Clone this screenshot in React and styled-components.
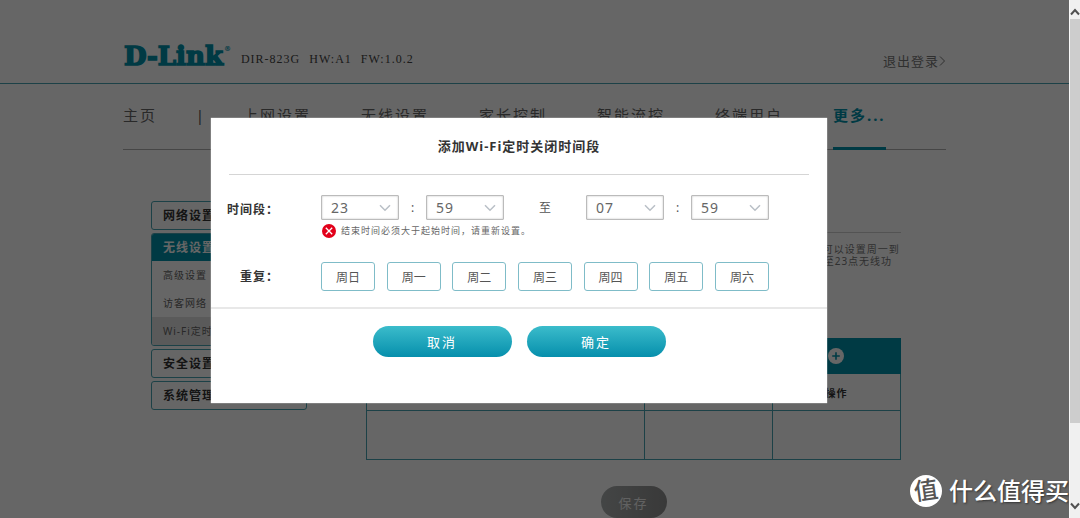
import React, { useState } from "react";
import styled, { createGlobalStyle, css } from "styled-components";

const teal = "#0091aa";
const line = "#48a2b1";

const GlobalStyle = createGlobalStyle`
  * {
    box-sizing: border-box;
  }
  body {
    margin: 0;
    background: #fff;
    color: #555;
    font-family: "Noto Sans", "Noto Sans CJK SC", sans-serif;
    font-size: 12px;
  }
  h2, h3, p, ul {
    margin: 0;
    padding: 0;
    list-style: none;
  }
  button, select {
    font-family: inherit;
    cursor: pointer;
  }
  a {
    color: inherit;
    text-decoration: none;
  }
`;

const Shell = styled.div`
  display: flex;
  height: 100vh;
`;

const Viewport = styled.div`
  position: relative;
  flex: 1;
  overflow: hidden;
`;

const Container = styled.div`
  width: 77%;
  margin: 0 auto;
`;

/* header */

const Header = styled.header`
  height: 84px;
  border-bottom: 1px solid ${line};
`;

const HeaderInner = styled(Container)`
  display: flex;
  align-items: flex-end;
  height: 100%;
  padding-bottom: 12px;
`;

const Logo = styled.svg`
  width: 108px;
  height: 28px;
  margin-right: 10px;
  overflow: visible;
  text {
    fill: ${teal};
    stroke: ${teal};
    font-family: "DejaVu Serif", serif;
    font-weight: bold;
  }
`;

const Version = styled.div`
  display: flex;
  gap: 9px;
  margin-bottom: 4px;
  color: #444;
  font-family: "Liberation Serif", serif;
  line-height: 16px;
  letter-spacing: 1px;
`;

const Logout = styled.a`
  display: flex;
  align-items: center;
  margin-left: auto;
  font-size: 13px;
  line-height: 20px;
  letter-spacing: 1px;
  color: #777;
`;

const NavList = styled.ul`
  display: flex;
  box-shadow: inset 0 -1px #b0b0b0;
`;

const NavItem = styled.li`
  flex: 0 0 118px;
  display: flex;
  font-size: 15px;
  line-height: 63px;
  letter-spacing: 2px;
  white-space: nowrap;

  &:first-child {
    flex-basis: 120px;
  }
  &:last-child {
    flex-basis: auto;
  }
`;

const NavLink = styled.a`
  border-bottom: 3px solid transparent;
  color: #666;

  ${props =>
    props.$active &&
    css`
      border-color: ${teal};
      color: ${teal};
      font-weight: bold;
    `}
`;

const NavDivider = styled.span`
  margin-left: auto;
  margin-right: 37px;
`;

/* content */

const Columns = styled(Container)`
  display: flex;
  padding: 51px 45px 0 28px;
`;

const Sidebar = styled.aside`
  flex: 0 0 156px;
  display: flex;
  flex-direction: column;
  gap: 3px;
  margin-right: 59px;
`;

const Group = styled.div`
  border: 1px solid ${line};
  border-radius: 3px;
  overflow: hidden;
`;

const GroupTitle = styled.a`
  display: block;
  padding-left: 11px;
  font-size: 12px;
  font-weight: bold;
  line-height: 27px;
  letter-spacing: 1px;
  color: ${props => (props.$active ? "#fff" : "#333")};
  background: ${props => (props.$active ? teal : "transparent")};
`;

const SubItem = styled.a`
  display: block;
  padding-left: 11px;
  font-size: 10px;
  line-height: 28px;
  letter-spacing: 1px;
  color: #666;
  background: ${props => (props.$active ? "#e2e2e2" : "transparent")};
`;

const Main = styled.main`
  flex: 1;
  display: flex;
  flex-direction: column;
`;

const SectionTitle = styled.h3`
  border-bottom: 1px solid #d0d0d0;
  font-size: 14px;
  line-height: 31px;
  letter-spacing: 1px;
`;

const Description = styled.p`
  margin: 10px 0 59px;
  font-size: 10px;
  line-height: 12px;
  letter-spacing: 1px;
  color: #777;
`;

const Table = styled.table`
  width: 100%;
  table-layout: fixed;
  border-collapse: collapse;
  color: #333;

  th, td {
    height: 37px;
    padding: 0;
    border: 1px solid ${line};
    font-size: 10px;
    letter-spacing: 1px;
  }
  td {
    height: 49px;
  }
`;

const TitleRow = styled.tr`
  background: ${teal};
  color: #fff;

  && th {
    height: 35px;
    border-color: ${teal};
  }
`;

const AddButton = styled.button`
  display: block;
  margin: 0 auto;
  width: 16px;
  height: 16px;
  padding: 0;
  border: 0;
  border-radius: 50%;
  background: #fff;
  color: ${teal};
`;

const SaveButton = styled.button`
  align-self: center;
  width: 66px;
  height: 32px;
  margin-top: 26px;
  border: 0;
  border-radius: 16px;
  background: linear-gradient(to right, #aaaeae, #8f8f8f);
  color: #f2f2f2;
  font-size: 13px;
  letter-spacing: 2px;
`;

/* dialog */

const Overlay = styled.div`
  position: absolute;
  inset: 0;
  padding: 118px 31px 0 0;
  background: rgba(0, 0, 0, 0.6);
`;

const Dialog = styled.div`
  width: 616px;
  max-width: 100%;
  margin: 0 auto;
  padding-bottom: 46px;
  background: #fff;
  box-shadow: 0 0 1px #fff;
`;

const DialogTitle = styled.h2`
  margin: 0 18px;
  border-bottom: 1px solid #d5d5d5;
  color: #333;
  font-size: 13px;
  line-height: 56px;
  letter-spacing: 1px;
  text-align: center;
`;

const DialogBody = styled.div`
  display: flex;
  flex-direction: column;
  gap: 24px;
  padding: 20px 58px 16px 0;
  border-bottom: 2px solid #e8e8e8;
`;

const FormRow = styled.div`
  display: flex;
`;

const FormLabel = styled.span`
  flex: 1;
  padding-right: 42px;
  color: #333;
  font-weight: bold;
  line-height: 29px;
  letter-spacing: 1px;
  text-align: right;
`;

const Field = styled.div`
  flex: 0 0 448px;
`;

const TimeRange = styled.div`
  display: flex;
  align-items: center;
  color: #555;
`;

const Separator = styled.span`
  flex: ${props => (props.$wide ? "0 0 82px" : "0 0 27px")};
  line-height: 16px;
  text-align: center;
`;

const SelectBox = styled.div`
  position: relative;
  flex: 1;

  svg {
    position: absolute;
    top: 9px;
    right: 8px;
    pointer-events: none;
  }
`;

const Select = styled.select`
  display: block;
  appearance: none;
  width: 100%;
  height: 25px;
  padding: 0 9px;
  border: 1px solid #bbb;
  border-radius: 1px;
  box-shadow: inset 0 0 2px #bbb;
  background: #fff;
  color: #666;
  font-size: 14px;
  letter-spacing: 1px;
`;

const ErrorText = styled.p`
  display: flex;
  align-items: center;
  gap: 5px;
  margin-top: 4px;
  padding-left: 1px;
  color: #666;
  font-size: 9px;
  line-height: 14px;
  letter-spacing: 1px;
`;

const Days = styled.div`
  display: flex;
  justify-content: space-between;
`;

const DayButton = styled.button`
  width: 54px;
  height: 29px;
  padding: 0;
  border: 1px solid #7fbcc8;
  border-radius: 3px;
  background: ${props => (props.$on ? teal : "#fff")};
  color: ${props => (props.$on ? "#fff" : "#555")};
  font-size: 12px;
`;

const Actions = styled.div`
  display: flex;
  justify-content: center;
  gap: 15px;
  padding-top: 17px;
`;

const ActionButton = styled.button`
  width: 139px;
  height: 31px;
  border: 0;
  border-radius: 16px;
  background: linear-gradient(#3bbccb, #068fac);
  color: #fff;
  font-size: 13px;
  letter-spacing: 2px;
`;

/* browser scrollbar and watermark */

const Scrollbar = styled.div`
  flex: 0 0 11px;
  display: flex;
  flex-direction: column;
  justify-content: space-between;
  border-left: 1px solid #fafafa;
  background: #f0f0f0;

  svg {
    display: block;
    height: 19px;
  }
`;

const Thumb = styled.div`
  flex: 0 0 78%;
  margin-bottom: auto;
  background: #cdcdcd;
`;

const Watermark = styled.div`
  position: absolute;
  right: 0;
  bottom: 10px;
  display: flex;
  align-items: center;
  gap: 7px;
  color: #fff;
  font-size: 24px;
  font-weight: 500;
  line-height: 34px;
  text-shadow: 1px 1px 2px #333;
`;

const Badge = styled.span`
  width: 32px;
  height: 32px;
  border-radius: 50%;
  background: #fff;
  color: #555;
  font-size: 24px;
  line-height: 30px;
  text-align: center;
  text-shadow: none;

  span {
    display: block;
    transform: rotate(-8deg);
  }
`;

const navItems = ["主页", "上网设置", "无线设置", "家长控制", "智能流控", "终端用户", "更多..."];
const wirelessItems = ["高级设置", "访客网络", "Wi-Fi定时关闭"];
const weekDays = ["周日", "周一", "周二", "周三", "周四", "周五", "周六"];

const range = n => Array.from({ length: n }, (_, i) => String(i).padStart(2, "0"));
const hours = range(24);
const minutes = range(60);

const TimeSelect = ({ label, options, value, onChange }) => (
  <SelectBox>
    <Select aria-label={label} value={value} onChange={e => onChange(e.target.value)}>
      {options.map(o => (
        <option key={o}>{o}</option>
      ))}
    </Select>
    <svg width="12" height="8" viewBox="0 0 12 8" fill="none" stroke="#b9bfc6" strokeWidth="1.5">
      <path d="M1 1.2 6 6.2 11 1.2" />
    </svg>
  </SelectBox>
);

const TimeDialog = () => {
  const [time, setTime] = useState({ sh: "23", sm: "59", eh: "07", em: "59" });
  const [days, setDays] = useState([]);
  const update = key => value => setTime({ ...time, [key]: value });
  const toggleDay = day =>
    setDays(days.includes(day) ? days.filter(d => d !== day) : [...days, day]);
  const invalid = time.eh + time.em <= time.sh + time.sm;

  return (
    <Dialog role="dialog" aria-labelledby="dialog-title">
      <DialogTitle id="dialog-title">添加Wi-Fi定时关闭时间段</DialogTitle>
      <DialogBody>
        <FormRow>
          <FormLabel id="range-label">时间段：</FormLabel>
          <Field role="group" aria-labelledby="range-label">
            <TimeRange>
              <TimeSelect label="开始小时" options={hours} value={time.sh} onChange={update("sh")} />
              <Separator>:</Separator>
              <TimeSelect label="开始分钟" options={minutes} value={time.sm} onChange={update("sm")} />
              <Separator $wide>至</Separator>
              <TimeSelect label="结束小时" options={hours} value={time.eh} onChange={update("eh")} />
              <Separator>:</Separator>
              <TimeSelect label="结束分钟" options={minutes} value={time.em} onChange={update("em")} />
            </TimeRange>
            {invalid && (
              <ErrorText>
                <svg width="14" height="14" viewBox="0 0 14 14">
                  <circle cx="7" cy="7" r="7" fill="#e2001a" />
                  <path d="M3.8 3.8 10.2 10.2M10.2 3.8 3.8 10.2" stroke="#fff" strokeWidth="1.3" />
                </svg>
                结束时间必须大于起始时间，请重新设置。
              </ErrorText>
            )}
          </Field>
        </FormRow>
        <FormRow>
          <FormLabel id="repeat-label">重复：</FormLabel>
          <Field role="group" aria-labelledby="repeat-label">
            <Days>
              {weekDays.map(day => (
                <DayButton
                  key={day}
                  type="button"
                  $on={days.includes(day)}
                  aria-pressed={days.includes(day)}
                  onClick={() => toggleDay(day)}
                >
                  {day}
                </DayButton>
              ))}
            </Days>
          </Field>
        </FormRow>
      </DialogBody>
      <Actions>
        <ActionButton type="button">取消</ActionButton>
        <ActionButton type="button">确定</ActionButton>
      </Actions>
    </Dialog>
  );
};

const App = () => (
  <Shell>
    <GlobalStyle />
    <Viewport>
      <Header>
        <HeaderInner>
          <Logo viewBox="0 0 108 28" role="img" aria-label="D-Link">
            <text x="1" y="22" fontSize="26" strokeWidth="1.6">D-Link</text>
            <text x="101" y="8" fontSize="7" strokeWidth="0">®</text>
          </Logo>
          <Version>
            <span>DIR-823G</span>
            <span>HW:A1</span>
            <span>FW:1.0.2</span>
          </Version>
          <Logout href="#logout">
            退出登录
            <svg width="7" height="12" viewBox="0 0 7 12" fill="none" stroke="currentColor">
              <path d="M1 1.5 5.5 6 1 10.5" />
            </svg>
          </Logout>
        </HeaderInner>
      </Header>
      <Container as="nav">
        <NavList>
          {navItems.map((item, i) => (
            <NavItem key={item}>
              <NavLink href="#nav" $active={i === navItems.length - 1}>
                {item}
              </NavLink>
              {i === 0 && <NavDivider>|</NavDivider>}
            </NavItem>
          ))}
        </NavList>
      </Container>
      <Columns>
        <Sidebar>
          <Group>
            <GroupTitle href="#network">网络设置</GroupTitle>
          </Group>
          <Group>
            <GroupTitle href="#wireless" $active>
              无线设置
            </GroupTitle>
            {wirelessItems.map((item, i) => (
              <SubItem key={item} href="#wireless" $active={i === 2}>
                {item}
              </SubItem>
            ))}
          </Group>
          <Group>
            <GroupTitle href="#security">安全设置</GroupTitle>
          </Group>
          <Group>
            <GroupTitle href="#system">系统管理</GroupTitle>
          </Group>
        </Sidebar>
        <Main>
          <SectionTitle>Wi-Fi定时关闭</SectionTitle>
          <Description>
            您可以在此页面设置Wi-Fi定时关闭的时间段，在该时间段内无线功能将会自动关闭。例如，您可以设置周一到周五期间的定时关闭时间段，路由器在设定的时间范围内将不再发射无线信号，每天从早上8点至23点无线功能关闭。
          </Description>
          <Table>
            <colgroup>
              <col width="52%" />
              <col width="24%" />
              <col width="24%" />
            </colgroup>
            <thead>
              <TitleRow>
                <th colSpan="2">定时关闭列表</th>
                <th>
                  <AddButton type="button" aria-label="添加">
                    <svg width="16" height="16" viewBox="0 0 16 16" stroke="currentColor" strokeWidth="1.6">
                      <path d="M8 4.2V11.8M4.2 8H11.8" />
                    </svg>
                  </AddButton>
                </th>
              </TitleRow>
              <tr>
                <th>时间段</th>
                <th>重复</th>
                <th>操作</th>
              </tr>
            </thead>
            <tbody>
              <tr>
                <td />
                <td />
                <td />
              </tr>
            </tbody>
          </Table>
          <SaveButton type="button">保存</SaveButton>
        </Main>
      </Columns>
      <Overlay>
        <TimeDialog />
      </Overlay>
      <Watermark>
        <Badge>
          <span>值</span>
        </Badge>
        什么值得买
      </Watermark>
    </Viewport>
    <Scrollbar>
      <svg width="10" height="19" viewBox="0 0 10 19" fill="none" stroke="#505050" strokeWidth="2">
        <path d="M1 14.5 5 10 9 14.5" />
      </svg>
      <Thumb />
      <svg width="10" height="19" viewBox="0 0 10 19" fill="none" stroke="#505050" strokeWidth="2">
        <path d="M1 4.5 5 9 9 4.5" />
      </svg>
    </Scrollbar>
  </Shell>
);

export default App;
